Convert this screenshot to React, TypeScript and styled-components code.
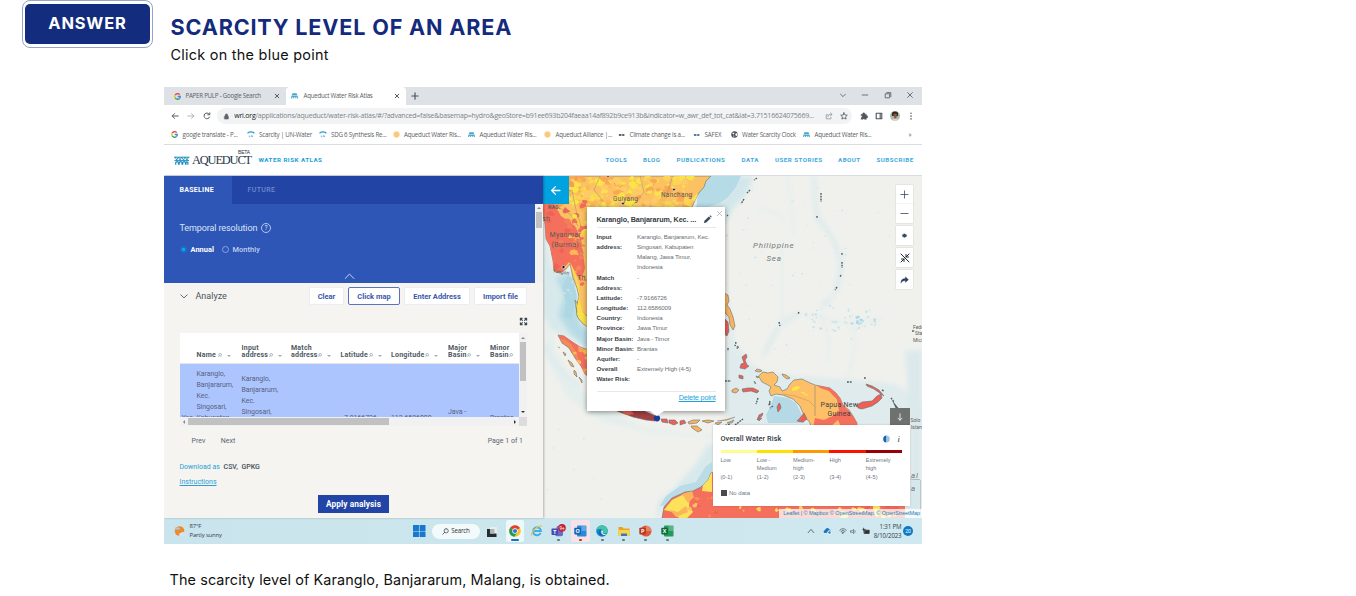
import React from "react";
import styled, { createGlobalStyle } from "styled-components";

const GlobalStyle = createGlobalStyle`
  *, *::before, *::after { box-sizing: border-box; }
  body { margin: 0; background: #fff; font-family: Roboto, "Liberation Sans", sans-serif; }
`;

const Page = styled.main`
  width: 1356px;
  height: 596px;
  overflow: hidden;
  background: #fff;
  display: flex;
  flex-direction: column;
`;

const Header = styled.header`
  display: flex;
  height: 87px;
  padding-left: 22px;
`;

const AnswerFrame = styled.div`
  width: 131px;
  height: 48px;
  border: 1px solid #98a2ce;
  border-radius: 8px;
  padding: 3px 2px;
  background: #fff;
`;

const AnswerLabel = styled.div`
  height: 40px;
  border-radius: 5px;
  background: #142c7e;
  color: #fff;
  font: 700 16.4px/38px Inter, sans-serif;
  letter-spacing: 0.85px;
  text-align: center;
`;

const Titles = styled.div`
  padding: 14px 0 0 17.5px;
  white-space: nowrap;
`;

const Title = styled.h1`
  margin: 0;
  color: #142a7c;
  font: 700 21.6px/27px Inter, sans-serif;
  letter-spacing: 0.83px;
`;

const Body = styled.p<{ $track: number }>`
  margin: 0;
  color: #111;
  font: 400 14.4px/28px Inter, sans-serif;
  letter-spacing: ${(p) => p.$track}px;
`;

const Caption = styled.div`
  padding: 22px 0 0 169.5px;
`;

const Shot = styled.section`
  width: 758px;
  height: 457px;
  margin-left: 164px;
  display: flex;
  flex-direction: column;
  overflow: hidden;
  white-space: nowrap;
`;

/* Browser chrome */
const TabStrip = styled.div`
  display: flex;
  height: 18px;
  background: #dee1e6;
  color: #4d5156;
`;

const BrowserTab = styled.div<{ $w: number; $active?: boolean }>`
  display: grid;
  grid-template-columns: ${(p) => (p.$active ? 12.5 : 11.5)}px 1fr 8px;
  align-items: center;
  width: ${(p) => p.$w}px;
  padding: 0 4px 0 ${(p) => (p.$active ? 5 : 10)}px;
  border-radius: 4px 4px 0 0;
  background: ${(p) => (p.$active ? "#fff" : "transparent")};
`;

const ChromeText = styled.span<{ $track?: number; $color?: string }>`
  font: 400 6.2px/10px "Open Sans", sans-serif;
  letter-spacing: ${(p) => p.$track ?? -0.2}px;
  color: ${(p) => p.$color ?? "#5a5e63"};
`;

const NewTab = styled.div`
  padding: 5px 0 0 5px;
  line-height: 0;
`;

const WindowButtons = styled.div`
  margin-left: auto;
  display: flex;
  align-items: center;
  gap: 14.5px;
  padding: 0 8px 2px 0;
`;

const Toolbar = styled.div`
  display: flex;
  align-items: center;
  height: 22px;
  padding: 0 7px;
  background: #fff;
`;

const NavButtons = styled.div`
  width: 46px;
  display: flex;
  gap: 8px;
`;

const Address = styled.div`
  width: 635px;
  height: 16px;
  border-radius: 8px;
  background: #f1f3f4;
  display: flex;
  align-items: center;
  justify-content: space-between;
  padding: 0 4px 0 6px;
  & > svg { flex: none; }
`;

const Url = styled.span`
  width: 586px;
  font: 400 7px/12px "Open Sans", sans-serif;
  letter-spacing: -0.22px;
  color: #808388;
  b { font-weight: 400; color: #202124; }
`;

const AddressActions = styled.div`
  display: flex;
  gap: 7.5px;
`;

const Extensions = styled.div`
  display: flex;
  align-items: center;
  gap: 7px;
  padding-left: 8px;
`;

const Bookmarks = styled.div`
  display: grid;
  grid-template-columns: 75.5px 72px 74px 75.5px 76px 74px 75px 37.5px 72.5px 105.5px 10px;
  align-items: center;
  height: 18px;
  padding: 0 0 2px 7px;
  border-bottom: 1px solid #dadce0;
`;

const Bookmark = styled.div`
  display: flex;
  align-items: center;
  gap: 4.5px;
`;

/* Site header */
const SiteHeader = styled.div`
  display: flex;
  align-items: center;
  height: 31px;
  padding-left: 10px;
  border-bottom: 1px solid #d8dce2;
  background: #fff;
`;

const Wordmark = styled.div`
  position: relative;
  width: 66.5px;
  margin-left: 2.5px;
  font: 400 12.4px/14px "Liberation Serif", serif;
  letter-spacing: -1.15px;
  color: #273646;
`;

const Beta = styled.small`
  position: absolute;
  top: -4px;
  left: 46px;
  font: 400 5px/6px "Liberation Sans", sans-serif;
  letter-spacing: -0.2px;
`;

const SiteName = styled.div`
  font-size: 6.2px;
  font-weight: 700;
  letter-spacing: 0.5px;
  color: #1a9cd9;
  width: 347px;
`;

const SiteNav = styled.nav`
  display: grid;
  grid-template-columns: 37.5px 33.5px 65px 33.5px 63px 38.5px 40px;
  font-size: 6.2px;
  font-weight: 700;
  letter-spacing: 0.48px;
  color: #3fa8de;
`;

const Workspace = styled.div`
  display: flex;
  height: 342px;
`;

/* Left panel */
const Panel = styled.aside`
  position: relative;
  z-index: 1;
  width: 379px;
  background: #f5f4f0;
  box-shadow: 1px 0 2px rgba(0, 0, 0, 0.25);
  display: flex;
  flex-direction: column;
`;

const ModeTabs = styled.div`
  display: flex;
  height: 28px;
  background: #2144a5;
`;

const ModeTab = styled.div<{ $active?: boolean }>`
  width: 68px;
  padding-left: 15.5px;
  font-size: 7px;
  font-weight: ${(p) => (p.$active ? 700 : 500)};
  line-height: 28px;
  letter-spacing: ${(p) => (p.$active ? 0.28 : 0.38)}px;
  color: ${(p) => (p.$active ? "#fff" : "#7189cc")};
  background: ${(p) => (p.$active ? "#2d56b7" : "transparent")};
`;

const FilterArea = styled.div`
  display: flex;
  height: 79px;
`;

const Filters = styled.div`
  flex: 1;
  padding: 18px 0 0 15.5px;
  background: #2d56b7;
  color: #dce4f6;
`;

const FilterTitle = styled.div`
  display: flex;
  align-items: center;
  gap: 3.5px;
  height: 12px;
  font-size: 9px;
  letter-spacing: -0.11px;
`;

const Help = styled.span`
  width: 10.5px;
  height: 10.5px;
  border: 0.7px solid #b8c7ec;
  border-radius: 50%;
  font-size: 6.5px;
  line-height: 9px;
  text-align: center;
`;

const Radios = styled.div`
  display: flex;
  align-items: center;
  height: 11px;
  margin-top: 10px;
  gap: 7.5px;
`;

const Radio = styled.div<{ $on?: boolean }>`
  display: flex;
  align-items: center;
  gap: 3.5px;
  font-size: 7.4px;
  letter-spacing: 0.06px;
  font-weight: ${(p) => (p.$on ? 700 : 500)};
  color: ${(p) => (p.$on ? "#fff" : "#c4d1f0")};
  &::before {
    content: "";
    width: 7.5px;
    height: 7.5px;
    border-radius: 50%;
    border: 1px solid ${(p) => (p.$on ? "#1d74cf" : "#8aa3de")};
    background: ${(p) => (p.$on ? "radial-gradient(#00b0ed 35%, #2264c4 60%)" : "none")};
  }
`;

const Collapse = styled.div`
  width: 11px;
  margin: 18px 0 0 164px;
  line-height: 0;
`;

const PanelScroll = styled.div`
  width: 8px;
  background: #f1f1f1;
  display: flex;
  flex-direction: column;
  align-items: center;
  padding-top: 3px;
  gap: 3px;
`;

const VThumb = styled.div<{ $h: number }>`
  width: 6px;
  height: ${(p) => p.$h}px;
  background: #c1c1c1;
`;

const Arrow = styled.i<{ $dir: "up" | "down" | "left" | "right"; $color?: string }>`
  width: 0;
  height: 0;
  border: 2px solid transparent;
  ${(p) => p.$dir === "up" && `border-bottom-color: ${p.$color ?? "#666"}; border-top: 0;`}
  ${(p) => p.$dir === "down" && `border-top-color: ${p.$color ?? "#666"}; border-bottom: 0;`}
  ${(p) => p.$dir === "left" && `border-right-color: ${p.$color ?? "#888"}; border-left: 0;`}
  ${(p) => p.$dir === "right" && `border-left-color: ${p.$color ?? "#333"}; border-right: 0;`}
`;

const AnalyzeBar = styled.div`
  display: grid;
  grid-template-columns: 16px 113.5px 1fr;
  align-items: center;
  height: 26px;
  padding-left: 15.5px;
  font-size: 9px;
  color: #4a5560;
`;

const Actions = styled.div`
  display: flex;
  gap: 4px;
`;

const Action = styled.button<{ $w: number; $active?: boolean }>`
  width: ${(p) => p.$w}px;
  height: 18px;
  padding: 0;
  flex: none;
  border: 1px solid ${(p) => (p.$active ? "#5874c0" : "#ecedf2")};
  border-radius: 2px;
  background: #fff;
  color: #3c58ad;
  font: 700 7.5px/15px Roboto, sans-serif;
`;

const ExpandRow = styled.div`
  padding: 8px 15.5px 0 0;
  height: 24px;
  line-height: 0;
  text-align: right;
`;

const Table = styled.div`
  display: grid;
  grid-template-columns: 339px 8px;
  grid-template-rows: 84px 9px;
  margin-left: 16px;
  width: 347px;
`;

const TableView = styled.div`
  overflow: hidden;
  background: #fff;
`;

const columns = "16.5px 45px 49.5px 49.5px 50.5px 57px 42px 29px";

const HeadRow = styled.div`
  display: grid;
  grid-template-columns: ${columns};
  align-items: end;
  height: 31px;
  padding-bottom: 3.5px;
  border-bottom: 0.5px solid #e4e4ec;
  white-space: pre;
`;

const HeadCell = styled.div`
  font-size: 7px;
  font-weight: 700;
  line-height: 7.4px;
  letter-spacing: 0.22px;
  color: #4f5963;
  svg { margin-left: 0.5px; }
  i { display: inline-block; margin-left: 5px; vertical-align: 0.5px; }
`;

const DataRow = styled.div`
  display: grid;
  grid-template-columns: ${columns};
  height: 53px;
  background: #adc5ff;
`;

const DataCell = styled.div<{ $top: number }>`
  padding-top: ${(p) => p.$top}px;
  font-size: 7px;
  line-height: 11px;
  letter-spacing: -0.06px;
  color: #56637c;
  white-space: pre;
`;

const VScroll = styled.div`
  background: #f1f1f1;
  display: flex;
  flex-direction: column;
  align-items: center;
  padding: 4px 0;
  gap: 3px;
  & > :last-child { margin-top: auto; }
`;

const HScroll = styled.div`
  background: #f1f1f1;
  display: flex;
  align-items: center;
  padding: 0 3px;
  gap: 3px;
  & > :last-child { margin-left: auto; }
`;

const HThumb = styled.div`
  width: 201px;
  height: 7px;
  background: #c1c1c1;
`;

const Corner = styled.div`
  background: #dcdcdc;
`;

const Pager = styled.div`
  display: flex;
  gap: 15.5px;
  padding: 9.5px 20px 0 27.5px;
  font-size: 7px;
  line-height: 10px;
  color: #5b6570;
  & > :last-child { margin-left: auto; }
`;

const Downloads = styled.div`
  padding: 16px 0 0 15.5px;
  font-size: 7px;
  line-height: 10px;
  color: #2a9fd8;
  b { font-weight: 500; color: #44505c; margin-left: 2px; }
  u { display: block; margin-top: 5.5px; }
`;

const Apply = styled.button`
  width: 71px;
  height: 18px;
  margin: 8px 0 0 154px;
  padding: 0;
  border: 0;
  background: #2144a5;
  color: #fff;
  font: 700 8.3px/18px Roboto, sans-serif;
  letter-spacing: 0.08px;
`;

/* Map */
const MapPane = styled.div`
  position: relative;
  width: 379px;
  height: 342px;
  overflow: hidden;
  background: #f0f1ed;
  & > svg { display: block; }
`;

const Back = styled.div`
  position: absolute;
  inset: 0 auto auto 0;
  width: 26px;
  height: 28px;
  padding-right: 1px;
  background: #00a3e0;
  display: grid;
  place-items: center;
`;

const Popup = styled.div`
  position: absolute;
  left: 43.5px;
  top: 31px;
  width: 138.5px;
  height: 203.5px;
  padding: 8px 9.5px 0 10px;
  background: #fff;
  box-shadow: 0 1px 5px rgba(0, 0, 0, 0.45);
  font-family: "Liberation Sans", sans-serif;
  &::after {
    content: "";
    position: absolute;
    left: 63px;
    bottom: -5px;
    border: 7px solid transparent;
    border-top: 5px solid #fff;
    border-bottom: 0;
  }
`;

const PopupClose = styled.div`
  position: absolute;
  top: 3px;
  right: 2.5px;
  line-height: 0;
`;

const PopupHead = styled.div`
  display: flex;
  justify-content: space-between;
  height: 13px;
  padding-right: 3.5px;
  border-bottom: 0.6px solid #e8e8e8;
  font-size: 7.2px;
  font-weight: 700;
  line-height: 9px;
  letter-spacing: -0.09px;
  color: #333b44;
  margin-bottom: 4px;
`;

const Detail = styled.div`
  display: grid;
  grid-template-columns: 40.5px 1fr;
  font-size: 6.2px;
  line-height: 10.15px;
  letter-spacing: -0.14px;
  color: #6a6f75;
  white-space: pre;
  b { color: #3a4148; letter-spacing: -0.02px; }
`;

const PopupFoot = styled.div`
  margin-top: 7px;
  border-top: 0.6px solid #e8e8e8;
  font-size: 7.3px;
  line-height: 11px;
  letter-spacing: -0.18px;
  text-align: right;
  color: #1ba3dd;
  text-decoration: underline;
`;

const Controls = styled.div`
  position: absolute;
  left: 353px;
  top: 9px;
  display: flex;
  flex-direction: column;
  gap: 3px;
`;

const Control = styled.div<{ $tight?: boolean }>`
  width: 17px;
  height: 19px;
  margin-top: ${(p) => (p.$tight ? -2.8 : 0)}px;
  background: #fff;
  box-shadow: 0 0 1px rgba(0, 0, 0, 0.25);
  display: grid;
  place-items: center;
`;

const LegendToggle = styled.div`
  position: absolute;
  left: 347px;
  top: 232px;
  width: 20px;
  height: 17px;
  background: #6f7171;
  display: grid;
  place-items: center;
`;

const Legend = styled.div`
  position: absolute;
  left: 170px;
  top: 249px;
  width: 197px;
  height: 80.5px;
  padding: 7.5px 8px 0 7.5px;
  background: #fff;
  box-shadow: 0 0 2px rgba(0, 0, 0, 0.2);
  color: #70757f;
`;

const LegendHead = styled.div`
  display: flex;
  align-items: center;
  height: 12px;
  margin-bottom: 5.5px;
  font-size: 7.3px;
  font-weight: 500;
  letter-spacing: 0.08px;
  color: #2f3740;
  & > svg { margin-left: auto; }
  em { font: italic 400 8.5px "Liberation Serif", serif; margin: 0 2px 0 8px; }
`;

const LegendScale = styled.div`
  display: grid;
  grid-template-columns: repeat(5, 1fr);
  font: 400 5.6px/8px "Liberation Sans", sans-serif;
  white-space: pre;
`;

const Step = styled.div<{ $color: string }>`
  height: 23px;
  padding-top: 3px;
  border-top: 3.5px solid ${(p) => p.$color};
`;

const NoData = styled.div`
  display: flex;
  align-items: center;
  gap: 2.5px;
  margin-top: 7.5px;
  font: 400 6px/9px "Liberation Sans", sans-serif;
  &::before { content: ""; width: 6px; height: 6px; background: #4a4a4a; }
`;

const Attribution = styled.div`
  position: absolute;
  right: 0;
  bottom: 0;
  width: 143px;
  height: 9px;
  padding-right: 2px;
  background: rgba(255, 255, 255, 0.75);
  font: 400 5.6px/9px "Liberation Sans", sans-serif;
  letter-spacing: -0.1px;
  text-align: right;
  color: #2580b8;
`;

/* Taskbar */
const Taskbar = styled.div`
  display: flex;
  align-items: center;
  height: 26px;
  padding: 0 9px 0 10px;
  background: linear-gradient(90deg, #c9e4ec, #d0e8ef);
  color: #33404a;
`;

const Weather = styled.div`
  width: 239px;
  display: flex;
  align-items: center;
  gap: 3.5px;
`;

const Stack = styled.div`
  font: 400 5.9px/9px "Open Sans", sans-serif;
  letter-spacing: -0.13px;
`;

const SearchPill = styled.div`
  display: flex;
  align-items: center;
  justify-content: center;
  gap: 2px;
  width: 48px;
  height: 15px;
  margin: 0 0 0 6.5px;
  border-radius: 8px;
  background: #f3fafc;
`;

const Apps = styled.div`
  display: grid;
  grid-template-columns: 24px repeat(8, 21.8px);
`;

const AppSlot = styled.div<{ $mark?: string; $bg?: string; $wide?: boolean }>`
  height: 22px;
  margin: 0 1.5px;
  display: flex;
  flex-direction: column;
  align-items: center;
  justify-content: center;
  border-radius: 2px;
  background: ${(p) => p.$bg ?? "transparent"};
  position: relative;
  &::after {
    content: "";
    position: absolute;
    bottom: 1px;
    width: ${(p) => (p.$wide ? 8 : 3)}px;
    height: 2px;
    border-radius: 1px;
    background: ${(p) => p.$mark ?? "transparent"};
  }
`;

const Tray = styled.div`
  margin-left: auto;
  display: grid;
  grid-template-columns: 15.5px 16px 11.5px 12px 11px 30px 10px;
  align-items: center;
`;

const Clock = styled(Stack)`
  text-align: right;
  letter-spacing: -0.17px;
  font-size: 6.2px;
  padding-right: 1.5px;
`;

const TrayBadge = styled.div`
  width: 10px;
  height: 10px;
  border-radius: 50%;
  background: #0c79c6;
  color: #fff;
  font-size: 5px;
  line-height: 10px;
  text-align: center;
`;

/* Icons */
type LineProps = { d: string; w?: number; h?: number; c?: string; s?: number; fill?: string; box?: number };
const Line = ({ d, w = 8, h = w, c = "#50565c", s = 1, fill = "none", box = 10 }: LineProps) => (
  <svg width={w} height={h} viewBox={`0 0 ${box} ${(box * h) / w}`} fill={fill} stroke={c} strokeWidth={s} strokeLinecap="round" strokeLinejoin="round">
    <path d={d} />
  </svg>
);

const CROSS = "M2 2l6 6M8 2l-6 6";

const GoogleG = () => (
  <svg width="7" height="7" viewBox="0 0 10 10" fill="none" strokeWidth="1.9">
    <path d="M8.2 2.4A4 4 0 0 0 1.7 3" stroke="#ea4335" />
    <path d="M1.7 3a4 4 0 0 0 0 4" stroke="#fbbc05" />
    <path d="M1.7 7a4 4 0 0 0 6.2.8" stroke="#34a853" />
    <path d="M7.9 7.8A4 4 0 0 0 9 5H5.2" stroke="#4285f4" />
  </svg>
);

const Arches = () => (
  <svg width="7" height="5.5" viewBox="0 0 8 6">
    <path d="M1.6 0h4.8l.6 2.2H1zM.5 2.8h7L8 6H6.6q0-1.8-.7-1.8T5.2 6H4.5q0-1.8-.6-1.8T3.2 6h-.7q0-1.8-.6-1.8T1.3 6H0z" fill="#47a6cb" />
  </svg>
);

const UnWater = () => (
  <svg width="8" height="7" viewBox="0 0 8 7" fill="none" stroke="#2d9bc9">
    <path d="M.5 2.2Q4-.5 7.5 2.2" strokeWidth="1.2" />
    <path d="M2.2 4.5v1.3h1.3M4.5 5.8V4.5l1.2 1.3V4.5" strokeWidth=".6" />
  </svg>
);

const Dot = () => (
  <svg width="7" height="7" viewBox="0 0 7 7"><circle cx="3.5" cy="3.5" r="2.9" fill="#fbc87c" stroke="#f8d69a" strokeWidth=".7" /></svg>
);

const Dash = ({ c = "#333" }: { c?: string }) => (
  <svg width="7" height="6" viewBox="0 0 8 6"><path d="M1 3h2.6M4.2 3h1.1M5.5 3H7.3" stroke={c} strokeWidth="1.8" /></svg>
);

const GlobeIcon = () => (
  <svg width="7" height="7" viewBox="0 0 10 10"><circle cx="5" cy="5" r="4.6" fill="#4a4f55" /><path d="M2 2l3 1-1 2-2-1zM6 4l3-1v3L7 8zM3 6l2 1-1 2z" fill="#fff" /></svg>
);

const SearchMark = () => (
  <svg width="4" height="4" viewBox="0 0 4 4" fill="none" stroke="#8f969e" strokeWidth=".7"><circle cx="2.2" cy="1.8" r="1.3" /><path d="M.4 3.6L1.3 2.7" /></svg>
);

const LogoMark = () => (
  <svg width="15.5" height="9" viewBox="0 0 15.5 9" fill="none" stroke="#1f8fbd">
    <path d="M0 1.2h15.5M.5 4.6h14.5" strokeWidth="1" />
    <path d="M1 1l1.7 3L4.4 1l1.7 3L7.8 1l1.7 3 1.7-3 1.7 3 1.7-3" strokeWidth=".9" />
    <path d="M1.7 8.8V6.6q1.4-2 2.8 0v2.2M5.2 8.8V6.6q1.4-2 2.8 0v2.2M8.7 8.8V6.6q1.4-2 2.8 0v2.2M12 8.8V6.6q1-1.6 1.9 0v2.2" strokeWidth="1.2" />
  </svg>
);

/* Map drawing; user units are the page's own pixels. */
const MAINLAND = "M543 176H711L706 181 704 187 698 194 692 207 680 232 640 250 590 330 584 323 577 316 576 306 579 297 577 288 573 278 570 264 566 269 560 273 554 271 553 261 550 246 546 239 545 224 543 213Z";
const MALAY = "M575 300L579 306 584 314 590 318V328L583 324 578 318Z";
const SUMATRA = "M558 335L564 336 571 341 580 347 592 351V380L585 374 581 366 575 358 569 348 562 343Z";
const GUINEA = "M758.5 376L763 372 768 373 773 372 778 377 777 382 774 385 780 387 782 391 787 389 790 384 794 380 802 379 808 382 815 385 830 388 836 393 840 398 843 405 849 410 853 416 857 423V428H812L809 421 805 418 803 413 800 406 793 399 783 395 776 394 771 396 769 391 771 387 768 385 762 382Z";
const JAVA = "M617 411L626 409 642 410 656 416 655 421 646 420 633 417Z";
const AUSTRALIA = "M662 518L664 507 672 498 681 494 685 492 693 491 701 487 708 480 711 473 730 465 920 480V520H662Z";
const ORANGE_ISLES = "M724 293l4 2 1 6-2 4 3 4 3 8 2 9-2 4-3-5-1-8-4-4zM755 371l4 1 3-1-1-1-4-1zM782 374l4 1 4 3-3 1-4-3zM756 376l3 1-2 1zM732 390l4-2 3 2-3 3-4-1zM754 381l2 2-1 1zM691 426l6 0 5 4-4 2-6-4zM688 422l5-2 7 0-3 3-8 1zM702 421l6-1 6 1-6 2zM715 423l7-1-4 3zM727 423l7-3-2 3zM563 352l3 2-1 2zM568 360l4 3 2 4-3-1zM574 370l2 2 1 5-3-3zM579 377l3 3v3zM717 421l10-1 8-3M558 347l2 1";
const RED_ISLES = "M724 318l4 4 1 9-2 5-3-2zM742 357l4-3 1 3-2 3 2 5 2 1-4 3-5-1 1-4 3-1zM739 375l4 1v3l-4-1zM742 389l6-1 5 0 6 3-2 2-6-2-8 1zM779 403l-2 4 1 5 3-4-1-4zM763 413l-4 2-2 5 5-4zM758 419l4-1-3 3zM797 421l3-3 4-5 3 6-4 3zM857 405l5-3 10-1 5-5 4-2 1 4-4 4-6 4-10 3-4-1zM866 384l6 2 7 4 5 6-3-2-7-5-7-3zM661 419l6 0 1 4-6-1zM669 420l6 0 3 3-4 2-5-2zM680 421l4-1 2 3-6 2zM737 346l2 1-2 2zM720 360l3 2-1 3z";

const rand = (seed: number) => {
  let s = seed;
  return () => ((s = (s * 16807) % 2147483647) / 2147483647);
};

const blob = (r: () => number, x: number, y: number, size: number) => {
  const pts: string[] = [];
  for (let i = 0; i < 8; i++) {
    const a = (i / 8) * Math.PI * 2;
    const k = size * (0.45 + r() * 0.75);
    pts.push(`${(x + Math.cos(a) * k).toFixed(1)} ${(y + Math.sin(a) * k * 0.8).toFixed(1)}`);
  }
  return `M${pts.join("L")}Z`;
};

const Patches = ({ seed, x, y, w, h, n, size, colors }: { seed: number; x: number; y: number; w: number; h: number; n: number; size: number; colors: string[] }) => {
  const r = rand(seed);
  return (
    <>
      {Array.from({ length: n }, (_, i) => (
        <path key={i} d={blob(r, x + r() * w, y + r() * h, size * (0.4 + r()))} fill={colors[Math.floor(r() * colors.length)]} />
      ))}
    </>
  );
};

const WorldMap = () => (
  <svg width="379" height="342" viewBox="543 176 379 342">
    <defs>
      <filter id="soft" x="-20%" y="-20%" width="140%" height="140%"><feGaussianBlur stdDeviation="2.4" /></filter>
      <filter id="edge"><feGaussianBlur stdDeviation="0.45" /></filter>
      <clipPath id="cm"><path d={MAINLAND} /></clipPath>
      <clipPath id="ca"><path d={AUSTRALIA} /></clipPath>
      <clipPath id="cs"><path d={SUMATRA} /></clipPath>
      <clipPath id="cg"><path d={GUINEA} /></clipPath>
    </defs>
    <rect x="543" y="176" width="379" height="342" fill="#f0f1ed" />
    <g filter="url(#soft)">
      <path d="M543 206l8 60 20 8 12 60-10 6-22-10-8-16z" fill="#d8e9eb" />
      <path d="M556 278l14-6 8 30 2 20 10 10v20l-12-10-10-12-10-14 6-20z" fill="#b7dbe6" />
      <path d="M700 176h54l-6 16-14 16-8 14-30 10z" fill="#d3e7eb" />
      <path d="M548 320l8 34 20 30 28 26 40 18 60 8 16-4-2 6-60-4-54-12-38-26-20-40z" fill="#e3eeed" />
      <path d="M725 345l20 15 20 12 30 4 60 4 40 4 30 20v24h-200z" fill="#dfebec" />
      <path d="M656 518l2-16 16-14 22-24 12-20 40 4v20l-50 20-30 10-12 24z" fill="#d8e9ec" />
      <path d="M905 350h17v168h-12v-90z" fill="#dce9ec" />
      <path d="M814 176q0 30 5 44 18 20 22 44-2 18-6 30M833 297l-12 10M800 312l-21 14-16 30M728 340l20 20M545 345q14 30 36 40M725 300q10 40 6 60M730 395q20-5 30 5 2 14-20 14" fill="none" stroke="#dfebec" strokeWidth="5" />
      <path d="M782 240v86M757 208q20 2 28 14M788 176l6 60M850 320q10 30-4 60M820 312q14 30 6 50M808 316l46 8 30-6" fill="none" stroke="#e7eeed" strokeWidth="3.5" />
    </g>
    <g filter="url(#edge)">
      <path d="M700 176h41l-5 11-8 10-8 6-24 8z" fill="#b5dbe7" />
      <path d="M774 396l14 2 8 5 5 10 3 10h-36l-2-8 5-10z" fill="#b5dae6" />
      <path d="M660 506l6-10 14-10 16-4 10-16 6-4v14l-12 14-18 5-12 10z" fill="#b9dce6" />
      <path d="M568 275l5 4 4 18-3 10-3 12-7-2 2-14-4-16z" fill="#aed7e4" />
      <Patches seed={91} x={725} y={185} w={190} h={175} n={95} size={1.1} colors={["#dbeaee", "#e0edee", "#cfe5ec"]} />
      <Patches seed={17} x={806} y={309} w={70} h={22} n={46} size={1.5} colors={["#c2e0ea", "#cfe5ec"]} />
      <Patches seed={61} x={850} y={316} w={12} h={10} n={8} size={2.2} colors={["#b0d9e7"]} />
      <Patches seed={29} x={548} y={400} w={110} h={110} n={36} size={1.1} colors={["#dceaed", "#e4eeee"]} />
      <Patches seed={8} x={545} y={280} w={30} h={48} n={14} size={1.8} colors={["#d8ebee", "#cbe4eb"]} />
      <g stroke="#657076" strokeWidth=".6">
        <path d={MAINLAND} fill="#fbc162" />
        <path d={MALAY} fill="#f9da4e" />
        <path d={SUMATRA} fill="#f68a57" />
        <path d={GUINEA} fill="#fdc067" />
        <path d={JAVA} fill="#a53f42" />
        <path d={AUSTRALIA} fill="#f4705c" />
        <path d={ORANGE_ISLES} fill="#f9b35e" />
        <path d={RED_ISLES} fill="#ee5f57" />
      </g>
      <path d="M620 410l10 0 4 4-8 1z" fill="#ee6656" />
      <g clipPath="url(#cm)">
        <path d="M543 176h40l-8 12-8 14-8 6-16-4z" fill="#f89a58" />
        <path d="M543 200l10 2 8 14 14 10 6 12 4 30-4 14-12-20-14 16-10-40z" fill="#f4705d" />
        <Patches seed={5} x={571} y={176} w={130} h={34} n={150} size={4.2} colors={["#f9e545", "#fbd552", "#fbb757", "#fce050", "#f9a956", "#fdcb68"]} />
        <Patches seed={77} x={570} y={180} w={18} h={60} n={40} size={3} colors={["#f9e545", "#fbb757", "#f26a5a", "#fbd04b"]} />
        <Patches seed={78} x={574} y={240} w={12} h={50} n={20} size={3} colors={["#f4705d", "#fbb757", "#f68858"]} />
        <Patches seed={44} x={543} y={208} w={32} h={65} n={22} size={4} colors={["#ef6257", "#f4705d", "#f67d5b"]} />
        <path d="M570 262l4 8 5 16 1 18 3 8 6 8v14l-9-12-3-8 2-20-4-16z" fill="#fae04a" />
        <path d="M572 190l4 20 5 16M600 176l-6 14 10 12M640 176l4 16-12 14M672 178l-6 20M556 206l14 8 8 12M576 236l8 18" fill="none" stroke="#a08c62" strokeWidth=".5" />
      </g>
      <g clipPath="url(#cs)">
        <path d="M558 335l8 1 8 6 6 10 4 16 8 2" stroke="#f4705d" strokeWidth="7" fill="none" />
        <Patches seed={12} x={570} y={347} w={18} h={26} n={14} size={3} colors={["#fbc159", "#f9a355", "#fbc159"]} />
      </g>
      <g clipPath="url(#cg)">
        <path d="M817 385l14 2 10 12 4 8 14 14v8h-17l-4-9-9 8h-16l2-10 9 2 8-4 6-6-2-12-14-8z" fill="#f4705d" />
        <path d="M817 387l12 4 8 9 2 11-8 6-9-1-7 2z" fill="#fdc067" />
        <path d="M792 388l5-2 4 1-4 3-5 1zM800 392l4 0 2 3zM804 395l4-1-1 2z" fill="#fae64a" />
        <path d="M815 386v30" stroke="#777" strokeWidth=".5" />
        <path d="M783 394l12 2 14 5 6 6" fill="none" stroke="#dfa75b" strokeWidth="1" />
      </g>
      <g clipPath="url(#ca)">
        <path d="M664 510l8-10 10-5 8 1-1 10 4 6-6 6h-8l-6-6z" fill="#fbe25a" />
        <path d="M703 484l9-12v20l-10-1z" fill="#fbe25a" />
        <path d="M682 494l10-3 2 6-6 6zM670 510l8 2 8-6 2 6-12 5z" fill="#fbb45c" />
        <Patches seed={66} x={690} y={490} w={26} h={28} n={9} size={2.4} colors={["#fbc45f", "#f98f55", "#f26258"]} />
        <Patches seed={31} x={740} y={507} w={80} h={6} n={8} size={2.4} colors={["#fbd75a", "#fbe65a"]} />
        <Patches seed={32} x={840} y={507} w={60} h={10} n={20} size={4} colors={["#f26258", "#fbd75a", "#fbe65a"]} />
        <path d="M905 470h17v50h-17z" fill="#d7e8ec" />
      </g>
      <path d="M757 178l-3 2M750 190l-3 3M744 199l-3 5M727 216l1-1M821 193v9M817 216v2M842 253v2M842 262v6M841 275l-1 2M837 287l-2 3M799 312l-1 2M779 322l1 4M736 342l-1 4M758 398l-2 6M770 401l-1 4M770 403l-1 3M847 382h5M864 378h2M882 390l2 1M891 398l3 4M728 348v3M725 381h6M773 406l-3 2M912 331h3M720 427l10-3M735 425l8-6" stroke="#4e5d62" strokeWidth="1.4" strokeDasharray="1.8 1" fill="none" />
      <path d="M892 400l8 10 10 9-6-2-8-8z" fill="#56656b" />
    </g>
    <g fontFamily="Roboto, sans-serif" fontSize="7" fill="#595c55" letterSpacing=".3">
      <text x="613" y="201" fontSize="6.4">Guiyang</text>
      <text x="661" y="197" fontSize="6.4">Nanchang</text>
      <text x="548" y="209" fontSize="4.8" fontWeight="700">NAG.</text>
      <text x="542" y="221">sh</text>
      <text x="549.5" y="237">Myanmar</text>
      <text x="551.5" y="247">(Burma)</text>
      <text x="577" y="280">Th</text>
      <text x="553" y="274" fontSize="5" fontStyle="italic" letterSpacing="0" transform="rotate(10 563 272)">Yangon</text>
      <g fontStyle="italic" fontSize="8" letterSpacing=".75" fill="#737a7b">
        <text x="753" y="248">Philippine</text>
        <text x="766.5" y="261">Sea</text>
        <text x="911" y="478">al</text>
        <text x="911" y="491">a</text>
      </g>
      <g fill="#3f4142" letterSpacing=".25">
        <text x="820.5" y="406.5" fontSize="7">Papua New</text>
        <text x="827.5" y="416" fontSize="7">Guinea</text>
      </g>
      <g fontSize="5" letterSpacing="0">
        <text x="913" y="329">Fede</text>
        <text x="915" y="335">Sta</text>
        <text x="913" y="342">Micr</text>
        <text x="910.5" y="422">Solo</text>
        <text x="911" y="428.5">Islan</text>
      </g>
    </g>
    <g fill="#111" stroke="#fff" strokeWidth=".5">
      <circle cx="623" cy="203.5" r="1.3" /><circle cx="674" cy="189.5" r="1.3" />
      <circle cx="563.5" cy="267" r="1.5" /><circle cx="608" cy="176" r="1.3" />
    </g>
    <circle cx="657" cy="418.3" r="3.1" fill="#153f9a" />
  </svg>
);

const details: [string, string][] = [
  ["Input\naddress:", "Karanglo, Banjararum, Kec.\nSingosari, Kabupaten\nMalang, Jawa Timur,\nIndonesia"],
  ["Match\naddress:", "-"],
  ["Latitude:", "-7.9166726"],
  ["Longitude:", "112.6586009"],
  ["Country:", "Indonesia"],
  ["Province:", "Jawa Timur"],
  ["Major Basin:", "Java - Timor"],
  ["Minor Basin:", "Brantas"],
  ["Aquifer:", "-"],
  ["Overall\nWater Risk:", "Extremely High (4-5)"],
];

const legend = [
  ["#fdfd8e", "Low\n", "(0-1)"],
  ["#fde000", "Low -\nMedium", "(1-2)"],
  ["#ff9900", "Medium-\nhigh", "(2-3)"],
  ["#fc1000", "High\n", "(3-4)"],
  ["#980008", "Extremely\nhigh", "(4-5)"],
];

const bookmarks: [React.ReactNode, string][] = [
  [<GoogleG />, "google translate - P..."],
  [<UnWater />, "Scarcity | UN-Water"],
  [<UnWater />, "SDG 6 Synthesis Re..."],
  [<Dot />, "Aqueduct Water Ris..."],
  [<Arches />, "Aqueduct Water Ris..."],
  [<Dot />, "Aqueduct Alliance |..."],
  [<Dash />, "Climate change is a..."],
  [<Dash c="#2b4c8c" />, "SAFEX"],
  [<GlobeIcon />, "Water Scarcity Clock"],
  [<Arches />, "Aqueduct Water Ris..."],
];

const heads = ["", "Name ", "Input\naddress", "Match\naddress", "Latitude", "Longitude", "Major\nBasin", "Minor\nBasin"];

const Office = ({ color, dark, letter, round }: { color: string; dark: string; letter: string; round?: boolean }) => (
  <svg width="13" height="12" viewBox="0 0 13 12">
    {round ? <circle cx="7" cy="6" r="5.6" fill={color} /> : <rect x="3" y=".5" width="9.5" height="11" rx="1" fill={color} />}
    <path d={round ? "M7 .4A5.6 5.6 0 0 1 12.6 6H7z" : "M7.5 .5h4a1 1 0 0 1 1 1V6h-5z"} fill="#fff" opacity=".25" />
    <rect x=".3" y="2.8" width="6.6" height="6.6" rx=".8" fill={dark} />
    <text x="3.6" y="8" fontSize="5.4" fontWeight="700" fill="#fff" textAnchor="middle" fontFamily="Open Sans, sans-serif">{letter}</text>
  </svg>
);

export default function App() {
  return (
    <Page>
      <GlobalStyle />
      <Header>
        <AnswerFrame><AnswerLabel>ANSWER</AnswerLabel></AnswerFrame>
        <Titles>
          <Title>SCARCITY LEVEL OF AN AREA</Title>
          <Body $track={0.28}>Click on the blue point</Body>
        </Titles>
      </Header>
      <Shot>
        <TabStrip>
          <BrowserTab $w={122}>
            <GoogleG /><ChromeText $track={-0.26}>PAPER PULP - Google Search</ChromeText>
            <Line d={CROSS} w={6} s={1.6} />
          </BrowserTab>
          <BrowserTab $w={120} $active>
            <Arches /><ChromeText $track={-0.26}>Aqueduct Water Risk Atlas</ChromeText>
            <Line d={CROSS} w={6} s={1.6} />
          </BrowserTab>
          <NewTab><Line d="M5 1v8M1 5h8" w={8} s={1.5} /></NewTab>
          <WindowButtons>
            <Line d="M2 4l3 3 3-3" /><Line d="M1.5 5h7" />
            <Line d="M2 3.5h5v5H2zM3.5 2h5v5" /><Line d={CROSS} />
          </WindowButtons>
        </TabStrip>
        <Toolbar>
          <NavButtons>
            <Line d="M9 5H1.5M4.5 2l-3 3 3 3" s={1.2} />
            <Line d="M1 5h7.5M5.5 2l3 3-3 3" c="#a0a4a8" />
            <Line d="M8.3 6.2A3.6 3.6 0 1 1 7.8 2.6M8.5 1v2.4H6" s={1.2} />
          </NavButtons>
          <Address>
            <Line d="M2.5 4.5h5v4h-5zM3.5 4.5V2.8a1.5 1.5 0 0 1 3 0v1.7" w={7} fill="#5f6368" c="#5f6368" />
            <Url><b>wri.org</b>/applications/aqueduct/water-risk-atlas/#/?advanced=false&amp;basemap=hydro&amp;geoStore=b91ee693b204faeaa14af892b9ce913b&amp;indicator=w_awr_def_tot_cat&amp;lat=3.71516624075669...</Url>
            <AddressActions>
              <Line d="M3.5 3.5H1.5v5h6v-2M3.5 6q0-3 3-3h2M6.8 1.2L8.8 3 6.8 4.8" c="#8a8e92" s={0.9} />
              <Line d="M5 1l1.2 2.7 2.9.3L7 6l.6 2.9L5 7.4 2.4 8.9 3 6 .9 4l2.9-.3z" />
            </AddressActions>
          </Address>
          <Extensions>
            <Line d="M1.5 4.2V2.8h2a1.3 1.3 0 1 1 2.4 0h2v2a1.3 1.3 0 1 1 0 2.4v2H5.8a1.2 1.2 0 0 0-2.2 0H1.5V6.8a1.3 1.3 0 0 0 0-2.6z" fill="#50565c" s={0.5} />
            <Line d="M1.5 1.5h7v7h-7zM6.5 2v6" s={1.4} />
            <svg width="10" height="10" viewBox="0 0 10 10"><circle cx="5" cy="5" r="5" fill="#a9bfae" /><path d="M2 5Q1 .6 5 .6T8 5z" fill="#2e2826" /><path d="M3.4 2.8h3.4V6L5.6 7.4h-1.4z" fill="#99533c" /><path d="M2 9Q5 6.6 8 9 5 11 2 9z" fill="#ddd6cc" /></svg>
            <Line d="M5 1.5v.2M5 5v.2M5 8.5v.2" s={1.8} />
          </Extensions>
        </Toolbar>
        <Bookmarks>
          {bookmarks.map(([icon, label], i) => (
            <Bookmark key={i}>{icon}<ChromeText $track={i === 7 ? -0.1 : -0.22}>{label}</ChromeText></Bookmark>
          ))}
          <ChromeText>»</ChromeText>
        </Bookmarks>
        <SiteHeader>
          <LogoMark />
          <Wordmark>AQUEDUCT<Beta>BETA</Beta></Wordmark>
          <SiteName>WATER RISK ATLAS</SiteName>
          <SiteNav>
            {["TOOLS", "BLOG", "PUBLICATIONS", "DATA", "USER STORIES", "ABOUT", "SUBSCRIBE"].map((t) => <span key={t}>{t}</span>)}
          </SiteNav>
        </SiteHeader>
        <Workspace>
          <Panel>
            <ModeTabs><ModeTab $active>BASELINE</ModeTab><ModeTab>FUTURE</ModeTab></ModeTabs>
            <FilterArea>
              <Filters>
                <FilterTitle>Temporal resolution <Help>?</Help></FilterTitle>
                <Radios><Radio $on>Annual</Radio><Radio>Monthly</Radio></Radios>
                <Collapse><Line d="M1 5l4-4 4 4" w={11} h={6} c="#cdd8f3" s={0.9} /></Collapse>
              </Filters>
              <PanelScroll><Arrow $dir="up" $color="#888" /><VThumb $h={16} /></PanelScroll>
            </FilterArea>
            <AnalyzeBar>
              <Line d="M1 1l4 4 4-4" w={8} h={5} s={1.1} />
              <span>Analyze</span>
              <Actions>
                <Action $w={35}>Clear</Action>
                <Action $w={52} $active>Click map</Action>
                <Action $w={66}>Enter Address</Action>
                <Action $w={53}>Import file</Action>
              </Actions>
            </AnalyzeBar>
            <ExpandRow><Line d="M1.5 3.5v-2h2M1.8 1.8l2 2M6.5 1.5h2v2M8.2 1.8l-2 2M1.5 6.5v2h2M1.8 8.2l2-2M8.5 6.5v2h-2M8.2 8.2l-2-2" w={9} s={1.2} c="#3a4652" /></ExpandRow>
            <Table>
              <TableView>
                <HeadRow>
                  {heads.map((h, i) => (
                    <HeadCell key={i}>
                      {h}{h && <><SearchMark />{i < 7 && <Arrow $dir="down" $color="#a5abb2" />}</>}
                    </HeadCell>
                  ))}
                </HeadRow>
                <DataRow>
                  <DataCell $top={48.5}>{" Yes"}</DataCell>
                  <DataCell $top={4.5}>{"Karanglo,\nBanjararum,\nKec.\nSingosari,\nKabupaten"}</DataCell>
                  <DataCell $top={10}>{"Karanglo,\nBanjararum,\nKec.\nSingosari,"}</DataCell>
                  <DataCell $top={48.5}> </DataCell>
                  <DataCell $top={48.5}>{" -7.9166726"}</DataCell>
                  <DataCell $top={48.5}>112.6586009</DataCell>
                  <DataCell $top={43}>Java -</DataCell>
                  <DataCell $top={48.5}>Brantas</DataCell>
                </DataRow>
              </TableView>
              <VScroll><Arrow $dir="up" $color="#888" /><VThumb $h={39} /><Arrow $dir="down" $color="#333" /></VScroll>
              <HScroll><Arrow $dir="left" /><HThumb /><Arrow $dir="right" /></HScroll>
              <Corner />
            </Table>
            <Pager><span>Prev</span><span>Next</span><span>Page 1 of 1</span></Pager>
            <Downloads>Download as <b>CSV,</b> <b>GPKG</b><u>Instructions</u></Downloads>
            <Apply>Apply analysis</Apply>
          </Panel>
          <MapPane>
            <WorldMap />
            <Back><Line d="M9 5H1.5M5 1.5L1.5 5 5 8.5" w={11} c="#fff" s={1.2} /></Back>
            <Popup>
              <PopupClose><Line d={CROSS} w={7} c="#aaa" s={1.1} /></PopupClose>
              <PopupHead>
                Karanglo, Banjararum, Kec. ...
                <svg width="9" height="9" viewBox="0 0 10 10" fill="#3a4a60"><path d="M1 9l.6-2.6L6.6 1.6l2 2L3.6 8.4zM7.2 1l.8-.6L9.7 2l-.7.9z" /></svg>
              </PopupHead>
              {details.map(([k, v]) => <Detail key={k}><b>{k}</b><span>{v}</span></Detail>)}
              <PopupFoot>Delete point</PopupFoot>
            </Popup>
            <Controls>
              <Control><Line d="M5 1v8M1 5h8" w={9} s={0.9} c="#3c4d63" /></Control>
              <Control $tight><Line d="M1 5h8" w={9} s={0.9} c="#3c4d63" /></Control>
              <Control><Line d="M5 2.5l3 1.7v2L5 7.8 2 6.2v-2z" w={7} fill="#34455c" c="#34455c" s={0.5} /></Control>
              <Control><Line d="M1 1l8 8M9 1L6 4M6 1.5V4h2.5M1 9l3-3M1.5 6H4v2.5" w={10} s={1} c="#222c38" /></Control>
              <Control><Line d="M1 8.5Q1 4 6 4V2l3.4 3.2L6 8.2V6Q3 6 1 8.5z" w={9} fill="#2c405c" c="#2c405c" s={0.4} /></Control>
            </Controls>
            <LegendToggle><Line d="M5 1v8M2.5 6.5L5 9l2.5-2.5" w={8} c="#fff" s={1} /></LegendToggle>
            <Legend>
              <LegendHead>
                Overall Water Risk
                <svg width="7" height="8" viewBox="0 0 7 8"><path d="M3.5 .5a3.3 3.5 0 0 0 0 7z" fill="#1565ad" /><path d="M3.5 .5a3.3 3.5 0 0 1 0 7z" fill="#9fc4e4" /></svg>
                <em>i</em>
              </LegendHead>
              <LegendScale>
                {legend.map(([color, name]) => <Step key={color} $color={color}>{name}</Step>)}
                {legend.map(([, , range]) => <span key={range}>{range}</span>)}
              </LegendScale>
              <NoData>No data</NoData>
            </Legend>
            <Attribution>Leaflet | © Mapbox © OpenStreetMap, © OpenStreetMap</Attribution>
          </MapPane>
        </Workspace>
        <Taskbar>
          <Weather>
            <svg width="12" height="12" viewBox="0 0 12 12"><circle cx="5.5" cy="6" r="4.8" fill="#f08a22" /><path d="M1 4.5Q1 1.5 4 2.5 6 2 6 4.5z" fill="#a9c8f0" /><path d="M5.5 11q-1.2-3 1.7-3.2 1.8-2 3 .2 2 .8 1 3z" fill="#d3e3fa" /></svg>
            <Stack>87°F<br />Partly sunny</Stack>
          </Weather>
          <svg width="12.5" height="12.5" viewBox="0 0 12 12" fill="#1679cf"><path d="M0 0h5.7v5.7H0zM6.3 0H12v5.7H6.3zM0 6.3h5.7V12H0zM6.3 6.3H12V12H6.3z" /></svg>
          <SearchPill><Line d="M6 1a3 3 0 1 1 0 6 3 3 0 0 1 0-6M3.8 6.2L1 9" w={7} s={1.2} /><ChromeText $color="#333">Search</ChromeText></SearchPill>
          <Apps>
            <AppSlot><svg width="10" height="11" viewBox="0 0 10 11"><path d="M3 1h7v7H3z" fill="#e8eeee" /><path d="M0 3h3v4.5h6.5V11H0z" fill="#252b2e" /><path d="M3 3h4.5v4.5H3z" fill="#aeb6b8" /></svg></AppSlot>
            <AppSlot $bg="#eef7fa" $mark="#1275c0" $wide>
              <svg width="12" height="12" viewBox="0 0 12 12"><circle cx="6" cy="6" r="5.8" fill="#f7c52a" /><path d="M6 6L1 3A5.8 5.8 0 0 1 11 3z" fill="#e34133" /><path d="M6 6L1 3a5.8 5.8 0 0 0 4.5 8.8L8.4 7z" fill="#249a53" /><circle cx="6" cy="6" r="2.7" fill="#fff" /><circle cx="6" cy="6" r="2.1" fill="#2c76e0" /></svg>
            </AppSlot>
            <AppSlot><svg width="12" height="12" viewBox="0 0 12 12" fill="none"><path d="M9.6 8A4 4 0 1 1 10 6H3" stroke="#42aee6" strokeWidth="1.9" /><path d="M1 10.8Q-.8 8 5 3.3 10-.3 11 1.5" stroke="#e8c553" strokeWidth="1.1" /></svg></AppSlot>
            <AppSlot $mark="#66747b">
              <svg width="16" height="14" viewBox="0 0 16 14"><circle cx="8.5" cy="4" r="2.2" fill="#7478d1" /><rect x="5" y="5.5" width="8" height="6.8" rx="2" fill="#666cc8" /><rect x="1.5" y="4.5" width="6.5" height="6.5" rx=".8" fill="#464caf" /><text x="4.8" y="9.7" fontSize="5" fill="#fff" textAnchor="middle" fontWeight="700">T</text><circle cx="12" cy="3.9" r="3.8" fill="#c62135" /><text x="12" y="5.5" fontSize="4.6" fill="#fff" textAnchor="middle">9+</text></svg>
            </AppSlot>
            <AppSlot $bg="#f7e3e7" $mark="#ca2b32"><Office color="#278ad9" dark="#0c63b7" letter="O" /></AppSlot>
            <AppSlot $mark="#66747b">
              <svg width="12" height="12" viewBox="0 0 12 12"><circle cx="6" cy="6" r="5.8" fill="#1382cb" /><path d="M.4 5A5.8 5.8 0 0 1 11.8 6q0 2.6-3.2 2.6Q6 8.400 7 6.600 7.300 4 4.800 4 1.800 3.800.4 5z" fill="#44c6a3" /><path d="M5 5q-2.200 4 3 5.700Q3.500 11.200 3 7.800 3 5.500 5 5z" fill="#155c9e" /><path d="M5.300 5.600Q6 5 6.900 5.800q.2 1-.4 1.700.3 1.500 2.500 1.700l1.800-.3Q9 10.500 7 9.800 4.800 8.800 5.300 5.600z" fill="#e4f4f4" /></svg>
            </AppSlot>
            <AppSlot $mark="#66747b"><svg width="12" height="11" viewBox="0 0 12 11"><path d="M.5 1h4l1 1.5h6V10H.5z" fill="#eaa51f" /><path d="M.5 4h11v6H.5z" fill="#fbd153" /><path d="M3 7.5h6V10H3z" fill="#317cb8" /></svg></AppSlot>
            <AppSlot $mark="#66747b"><Office color="#dc5a38" dark="#b93a20" letter="P" round /></AppSlot>
            <AppSlot $mark="#66747b"><Office color="#229a5b" dark="#0d6a39" letter="X" /></AppSlot>
          </Apps>
          <Tray>
            <Line d="M1.500 7l3.500-4 3.500 4" s={1.1} />
            <svg width="9" height="8" viewBox="0 0 9 8"><path d="M1.500 6Q-.5 4 2 3 4-.6 6.500 2.500q2 .5 1.500 3z" fill="#1775c4" /><circle cx="6.500" cy="5.500" r="2.200" fill="#e8f3f9" /><circle cx="6.500" cy="5.500" r="1.200" fill="#2382cb" /></svg>
            <Line d="M1 4Q5 0 9 4M2.500 5.500Q5 3 7.500 5.500M4 7Q5 6 6 7L5 8z" s={1} />
            <Line d="M1 4h2l2-2v6L3 6H1zM7 3.500Q8 5 7 6.500" w={7} s={0.9} />
            <Line d="M3 4h6v4H3zM1 3h3M2 1.500v3" w={8} s={1} fill="#333" c="#333" />
            <Clock>1:31 PM<br />8/10/2023</Clock>
            <TrayBadge>20</TrayBadge>
          </Tray>
        </Taskbar>
      </Shot>
      <Caption><Body $track={0.11}>The scarcity level of Karanglo, Banjararum, Malang, is obtained.</Body></Caption>
    </Page>
  );
}
